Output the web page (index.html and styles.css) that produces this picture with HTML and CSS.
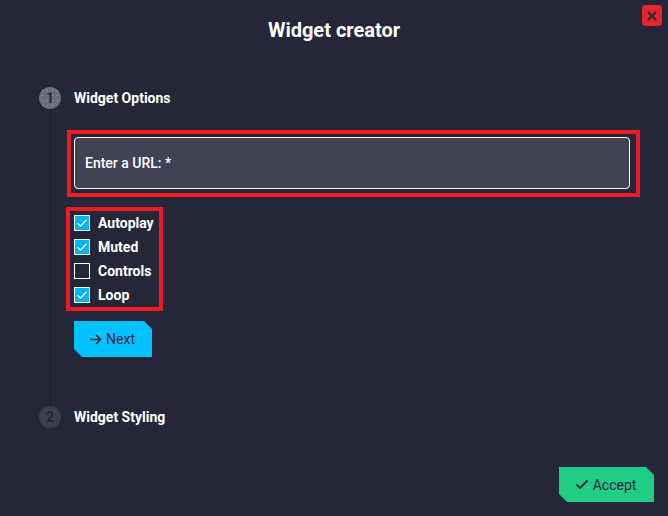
FILE: index.html
```html
<!DOCTYPE html>
<html lang="en">
<head>
<meta charset="utf-8">
<title>Widget creator</title>
<link rel="stylesheet" href="styles.css">
</head>
<body>
<div class="dialog">
  <button class="close" aria-label="Close">
    <svg width="12" height="12" viewBox="0 0 12 12"><path d="M2.5 2.5 L9.5 9.5 M9.5 2.5 L2.5 9.5" stroke="#2a2c3e" stroke-width="2" stroke-linecap="square"/></svg>
  </button>
  <h1 class="title">Widget creator</h1>

  <div class="steps">
    <div class="step-head">
      <span class="step-num active">1</span>
      <span class="step-label">Widget Options</span>
    </div>
    <div class="step-body">
      <div class="highlight url-wrap">
        <div class="url-input">Enter a URL: *</div>
      </div>
      <div class="highlight checks">
        <label class="check"><span class="box on"><svg width="12" height="10" viewBox="0 0 12 10"><path d="M1.5 5.2 L4.5 8 L10.5 1.8" fill="none" stroke="#fff" stroke-width="1.3"/></svg></span>Autoplay</label>
        <label class="check"><span class="box on"><svg width="12" height="10" viewBox="0 0 12 10"><path d="M1.5 5.2 L4.5 8 L10.5 1.8" fill="none" stroke="#fff" stroke-width="1.3"/></svg></span>Muted</label>
        <label class="check"><span class="box"></span>Controls</label>
        <label class="check"><span class="box on"><svg width="12" height="10" viewBox="0 0 12 10"><path d="M1.5 5.2 L4.5 8 L10.5 1.8" fill="none" stroke="#fff" stroke-width="1.3"/></svg></span>Loop</label>
      </div>
      <button class="btn next">
        <svg width="13" height="11" viewBox="0 0 13 11"><path d="M1 5.5 H11.5 M7 1 L11.5 5.5 L7 10" fill="none" stroke="#25273a" stroke-width="1.6"/></svg>
        Next
      </button>
    </div>
    <div class="step-head">
      <span class="step-num">2</span>
      <span class="step-label">Widget Styling</span>
    </div>
  </div>

  <div class="footer">
    <button class="btn accept">
      <svg width="14" height="11" viewBox="0 0 14 11"><path d="M1.5 5.5 L5 9 L12.5 1.5" fill="none" stroke="#25273a" stroke-width="1.8"/></svg>
      Accept
    </button>
  </div>
</div>
</body>
</html>
```

FILE: styles.css
```css
* { box-sizing: border-box; }
html, body {
  margin: 0;
  padding: 0;
  background: #252739;
  font-family: Roboto, "Liberation Sans", Arial, sans-serif;
  color: #ffffff;
}
.dialog {
  position: relative;
  width: 668px;
  height: 516px;
}
.close {
  position: absolute;
  top: 5px;
  right: 6px;
  width: 20px;
  height: 21px;
  border: none;
  border-radius: 4px;
  background: #e8262e;
  padding: 0;
  display: flex;
  align-items: center;
  justify-content: center;
}
.title {
  margin: 0;
  padding-top: 18px;
  text-align: center;
  font-size: 20px;
  line-height: 24px;
  font-weight: 700;
}
.steps {
  margin-top: 45px;
  margin-left: 39px;
}
.step-head {
  display: flex;
  align-items: center;
  gap: 13px;
  height: 22px;
}
.step-num {
  width: 22px;
  height: 22px;
  border-radius: 50%;
  background: #3b3d51;
  color: #25273a;
  font-size: 14px;
  font-weight: 700;
  display: flex;
  align-items: center;
  justify-content: center;
}
.step-num.active {
  background-color: #6c6d7e;
  background-image: radial-gradient(circle, #9d9eae 0.6px, transparent 0.9px);
  background-size: 5px 5px;
  background-position: 1px 1px;
  color: #2a2c3e;
}
.step-label {
  font-size: 14px;
  font-weight: 700;
}
.step-body {
  margin-left: 11px;
  border-left: 1px solid #1e1f30;
  padding: 21px 0 49px 16px;
  display: flex;
  flex-direction: column;
  align-items: flex-start;
}
.highlight {
  border: 4px solid #ed1c24;
}
.url-wrap {
  width: 573px;
  padding: 3px 6px 4px 3px;
}
.url-input {
  height: 52px;
  background: #404256;
  border: 1px solid #ffffff;
  border-radius: 4px;
  padding-left: 10px;
  display: flex;
  align-items: center;
  font-size: 14px;
  font-weight: 500;
  color: #ffffff;
}
.checks {
  margin-top: 10px;
  margin-left: -1px;
  padding: 4px 5px 4px 4px;
  display: flex;
  flex-direction: column;
  gap: 8px;
}
.check {
  display: flex;
  align-items: center;
  gap: 8px;
  height: 16px;
  font-size: 14px;
  font-weight: 700;
}
.box {
  width: 16px;
  height: 16px;
  border: 1px solid #ffffff;
  display: flex;
  align-items: center;
  justify-content: center;
}
.box.on {
  background: #00b6ef;
}
.btn {
  border: none;
  display: flex;
  align-items: center;
  justify-content: center;
  gap: 4px;
  font-family: Roboto, "Liberation Sans", Arial, sans-serif;
  color: #25273a;
  clip-path: polygon(0 0, calc(100% - 8px) 0, 100% 8px, 100% 100%, 8px 100%, 0 calc(100% - 8px));
}
.next {
  margin-top: 10px;
  margin-left: 7px;
  width: 78px;
  height: 36px;
  background: #00c2ff;
  font-size: 14px;
  padding: 0 2px 0 0;
}
.footer {
  margin-top: 39px;
  display: flex;
  justify-content: flex-end;
  padding-right: 14px;
}
.accept {
  width: 95px;
  height: 35px;
  background: #1fcd86;
  font-size: 14px;
  padding: 0 2px 0 0;
}
```
